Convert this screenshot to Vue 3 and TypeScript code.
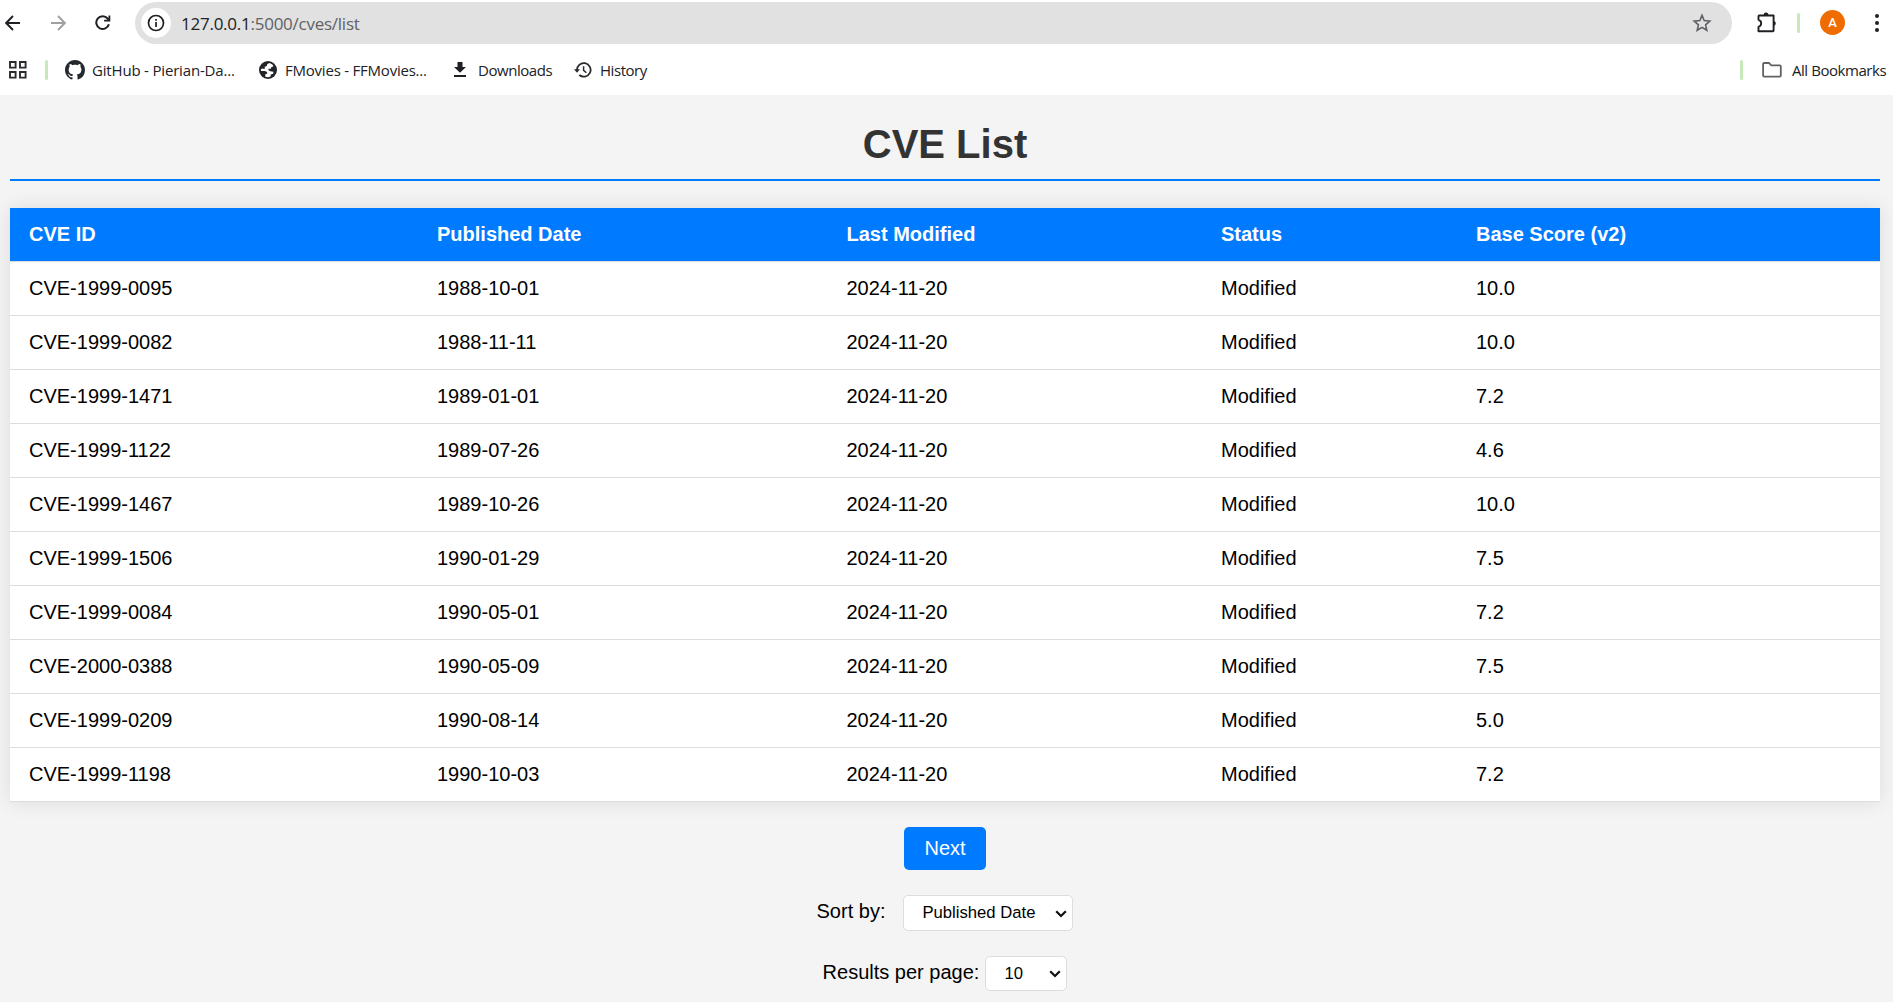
<script setup lang="ts">
import { ref } from 'vue'

interface Cve {
  id: string
  published: string
  modified: string
  status: string
  score: string
}

const headers: string[] = ['CVE ID', 'Published Date', 'Last Modified', 'Status', 'Base Score (v2)']

const make = (id: string, published: string, score: string): Cve => ({
  id,
  published,
  modified: '2024-11-20',
  status: 'Modified',
  score,
})

const rows = ref<Cve[]>([
  make('CVE-1999-0095', '1988-10-01', '10.0'),
  make('CVE-1999-0082', '1988-11-11', '10.0'),
  make('CVE-1999-1471', '1989-01-01', '7.2'),
  make('CVE-1999-1122', '1989-07-26', '4.6'),
  make('CVE-1999-1467', '1989-10-26', '10.0'),
  make('CVE-1999-1506', '1990-01-29', '7.5'),
  make('CVE-1999-0084', '1990-05-01', '7.2'),
  make('CVE-2000-0388', '1990-05-09', '7.5'),
  make('CVE-1999-0209', '1990-08-14', '5.0'),
  make('CVE-1999-1198', '1990-10-03', '7.2'),
])
</script>

<template>
  <div class="window">
    <header class="chrome">
      <div class="toolbar">
        <svg class="back" width="16" height="16" viewBox="0 0 16 16"><path d="M15 8H1.5M8 1 1.2 8 8 15" fill="none" stroke="#1f2023" stroke-width="1.9" /></svg>
        <svg class="forward" width="16" height="16" viewBox="0 0 16 16"><path d="M1 8h13.5M8 1l6.8 7L8 15" fill="none" stroke="#a0a0a2" stroke-width="1.9" /></svg>
        <svg class="reload" width="16" height="16" viewBox="0 0 16 16"><path d="M13.9 9.2A6.4 6.4 0 1 1 12.6 3.5L14.4 5.3" fill="none" stroke="#1f2023" stroke-width="2" /><path d="M15.3 .4v6.2H9.1V4.8h4.4V.4z" fill="#1f2023" /></svg>
        <div class="omnibox">
          <span class="site-info">
            <svg width="18" height="18" viewBox="0 0 18 18"><circle cx="9" cy="9" r="7.5" fill="none" stroke="#1f2023" stroke-width="1.7" /><path d="M8.2 8h1.7v5H8.2zM8.2 5h1.7v1.7H8.2z" fill="#1f2023" /></svg>
          </span>
          <span class="url"><b>127.0.0.1</b>:5000/cves/list</span>
          <svg class="star" width="20" height="20" viewBox="0 0 20 20"><path d="M10 2.4l2.2 5.2 5.6.5-4.2 3.7 1.2 5.5-4.8-2.9-4.8 2.9 1.2-5.5-4.2-3.7 5.6-.5z" fill="none" stroke="#5f6063" stroke-width="1.6" /></svg>
        </div>
        <svg class="ext" width="22" height="22" viewBox="0 0 22 22"><path d="M3.2 3.5H17.6V18.4Q17.6 19.2 16.8 19.2H2.5V14.9Q5.2 14 5.2 11.3T2.5 7.8V4.2Q2.5 3.5 3.2 3.5z" fill="none" stroke="#1f2023" stroke-width="1.9" stroke-linejoin="round" /><path d="M7.6 3.4a2.4 2.8 0 0 1 4.8 0zM17.8 8.9a2.5 2.5 0 0 1 0 4.9z" fill="#1f2023" /></svg>
        <i class="bar bar-top"></i>
        <span class="avatar">A</span>
        <svg class="menu" width="6" height="20" viewBox="0 0 6 20"><circle cx="3" cy="3" r="2" fill="#1f2023" /><circle cx="3" cy="10" r="2" fill="#1f2023" /><circle cx="3" cy="17" r="2" fill="#1f2023" /></svg>
      </div>
      <nav class="bookmarks">
        <svg class="apps" width="20" height="20" viewBox="0 0 20 20"><path d="M2 2h5.6v5.6H2zM12 2h5.6v5.6H12zM2 12h5.6v5.6H2zM12 12h5.6v5.6H12z" fill="none" stroke="#2a2b2e" stroke-width="1.9" /></svg>
        <i class="bar bar-left"></i>
        <svg class="github" width="20" height="20" viewBox="0 0 16 16"><path fill="#24292e" d="M8 0C3.58 0 0 3.58 0 8c0 3.54 2.29 6.53 5.47 7.59.4.07.55-.17.55-.38 0-.19-.01-.82-.01-1.49-2.01.37-2.53-.49-2.69-.94-.09-.23-.48-.94-.82-1.13-.28-.15-.68-.52-.01-.53.63-.01 1.08.58 1.23.82.72 1.21 1.87.87 2.33.66.07-.52.28-.87.51-1.07-1.78-.2-3.64-.89-3.64-3.95 0-.87.31-1.59.82-2.15-.08-.2-.36-1.02.08-2.12 0 0 .67-.21 2.2.82.64-.18 1.32-.27 2-.27s1.36.09 2 .27c1.53-1.04 2.2-.82 2.2-.82.44 1.1.16 1.92.08 2.12.51.56.82 1.27.82 2.15 0 3.07-1.87 3.75-3.65 3.95.29.25.54.73.54 1.48 0 1.07-.01 1.93-.01 2.2 0 .21.15.46.55.38A8.01 8.01 0 0 0 16 8c0-4.42-3.58-8-8-8z" /></svg>
        <span class="bm bm-github">GitHub - Pierian-Da...</span>
        <svg class="globe" width="18" height="18" viewBox="0 0 18 18"><circle cx="9" cy="9" r="9" fill="#232427" /><path d="M10.8 1.9 8.2 3.1 7.9 5 5.8 5.8 5.7 8 3.2 7.6 1.8 8.6 2 10 5.6 10.1Q8.4 10.4 8.5 12.2L6.3 13.4 6.2 15.6Q8.7 16.7 11.5 15.6L11.8 13.5 14.2 12.8 14.4 10.8 11.3 10.3 9.3 9 9.5 7.8 12 7.7 12.3 5.9 14.4 5.4 13.7 3.7z" fill="#fff" /></svg>
        <span class="bm bm-movies">FMovies - FFMovies...</span>
        <svg class="download" width="12" height="15" viewBox="0 0 12 15"><path d="M3.5 0h5v5H12L6 10.8 0 5h3.5zM0 12.9h12v2H0z" fill="#1f2023" /></svg>
        <span class="bm bm-downloads">Downloads</span>
        <svg class="clock" width="18" height="16" viewBox="0 0 18 16"><path d="M3 8.4A6.8 6.8 0 1 1 5.3 13" fill="none" stroke="#2a2b2e" stroke-width="1.8" /><path d="M0 7.3h6L3 10.8z" fill="#2a2b2e" /><path d="M9.6 4.2v4.2l2.8 2.4" fill="none" stroke="#2a2b2e" stroke-width="1.5" /></svg>
        <span class="bm bm-history">History</span>
        <span class="spacer"></span>
        <i class="bar bar-right"></i>
        <svg class="folder" width="20" height="16" viewBox="0 0 20 16"><path d="M1.1 13.6V2Q1.1 1 2.1 1H7l2.2 2.3h8.6q1 0 1 1v9.3q0 1-1 1H2.1q-1 0-1-1z" fill="none" stroke="#616265" stroke-width="1.8" /></svg>
        <span class="bm bm-all">All Bookmarks</span>
      </nav>
    </header>

    <main class="page">
      <h1>CVE List</h1>
      <table>
        <colgroup>
          <col class="c1" /><col class="c2" /><col class="c3" /><col class="c4" /><col />
        </colgroup>
        <thead>
          <tr><th v-for="h in headers" :key="h">{{ h }}</th></tr>
        </thead>
        <tbody>
          <tr v-for="r in rows" :key="r.id">
            <td>{{ r.id }}</td>
            <td>{{ r.published }}</td>
            <td>{{ r.modified }}</td>
            <td>{{ r.status }}</td>
            <td>{{ r.score }}</td>
          </tr>
        </tbody>
      </table>
      <button class="next" type="button">Next</button>
      <div class="field sort">
        <label>Sort by:</label>
        <div class="select">
          <span>Published Date</span>
          <svg width="12" height="8" viewBox="0 0 12 8"><path d="M1.2 1.2 6 6l4.8-4.8" fill="none" stroke="#111" stroke-width="2.2" /></svg>
        </div>
      </div>
      <div class="field per-page">
        <label>Results per page:</label>
        <div class="select">
          <span>10</span>
          <svg width="12" height="8" viewBox="0 0 12 8"><path d="M1.2 1.2 6 6l4.8-4.8" fill="none" stroke="#111" stroke-width="2.2" /></svg>
        </div>
      </div>
    </main>
  </div>
</template>

<style>
body {
  margin: 0;
  background: #f4f4f4;
  overflow: hidden;
}
</style>

<style scoped>
.window {
  height: 1002px;
  overflow: hidden;
  background: #f4f4f4;
  font-family: 'Liberation Sans', Arial, sans-serif;
}
svg { flex: none; display: block; }
.chrome {
  height: 95px;
  background: #fff;
  font-family: 'Open Sans', 'Noto Sans', sans-serif;
  color: #202124;
}
.toolbar {
  display: flex;
  align-items: center;
  height: 45px;
  padding-left: 5px;
}
.forward { margin-left: 29px; }
.reload { margin-left: 29px; }
.omnibox {
  display: flex;
  align-items: center;
  box-sizing: border-box;
  width: 1597px;
  height: 42px;
  margin: 1px 0 0 24px;
  padding: 0 20px 0 6px;
  border-radius: 21px;
  background: #e1e1e1;
}
.site-info {
  display: flex;
  align-items: center;
  justify-content: center;
  width: 30px;
  height: 30px;
  border-radius: 50%;
  background: #fff;
}
.url {
  margin-left: 10px;
  font-size: 17px;
  letter-spacing: -0.25px;
  color: #606164;
  white-space: nowrap;
}
.url b { font-weight: 400; color: #202124; }
.star { margin-left: auto; }
.ext { margin-left: 24px; }
.bar {
  display: block;
  flex: none;
  width: 3px;
  height: 20px;
  border-radius: 2px;
  background: #c7e9b9;
}
.bar-top { margin-left: 19px; }
.avatar {
  display: flex;
  align-items: center;
  justify-content: center;
  width: 25px;
  height: 25px;
  margin-left: 20px;
  border-radius: 50%;
  background: #ef6c00;
  color: #fff;
  font: 500 13px Roboto, sans-serif;
}
.menu { margin-left: 29px; }
.bookmarks {
  display: flex;
  align-items: center;
  height: 49px;
  padding: 0 6px 0 8px;
  font-size: 15px;
}
.bar-left { margin-left: 17px; }
.github { margin-left: 17px; }
.bm { flex: none; white-space: nowrap; line-height: 20px; letter-spacing: -0.45px; }
.bm-github { width: 141px; margin-left: 7px; letter-spacing: -0.18px; }
.globe { margin-left: 26px; }
.bm-movies { width: 142px; margin-left: 8px; letter-spacing: -0.22px; }
.download { margin-left: 27px; }
.bm-downloads { width: 74px; margin-left: 12px; }
.clock { margin-left: 22px; }
.bm-history { margin-left: 8px; }
.spacer { flex: 1; }
.folder { margin-left: 19px; }
.bm-all { width: 95px; margin-left: 10px; }

.page {
  display: flex;
  flex-direction: column;
  align-items: center;
  width: 1870px;
  margin-left: 10px;
  font-size: 20px;
  color: #000;
}
h1 {
  box-sizing: border-box;
  width: 100%;
  height: 86px;
  margin: 0 0 27px;
  padding-top: 26px;
  border-bottom: 2px solid #007bff;
  font-size: 40px;
  line-height: 46px;
  text-align: center;
  color: #333;
}
table {
  width: 100%;
  table-layout: fixed;
  border-collapse: separate;
  border-spacing: 0;
  background: #fff;
  box-shadow: 0 0 19px rgba(0, 0, 0, 0.1);
}
.c1 { width: 408px; }
.c2 { width: 409.5px; }
.c3 { width: 374.5px; }
.c4 { width: 255px; }
th, td {
  box-sizing: border-box;
  height: 54px;
  padding: 0 0 0 19px;
  border-bottom: 1px solid #ddd;
  text-align: left;
  line-height: 23px;
}
th { background: #007bff; color: #fff; }
.next {
  width: 82px;
  height: 43px;
  margin-top: 25px;
  padding: 0;
  border: 0;
  border-radius: 5px;
  background: #007bff;
  color: #fff;
  font: 20px 'Liberation Sans', Arial, sans-serif;
}
.field { display: flex; align-items: center; }
.field label { white-space: nowrap; padding-bottom: 3px; }
.sort { height: 36px; margin-top: 25px; }
.sort label { margin-right: 18px; }
.sort .select { width: 170px; }
.per-page { height: 35px; margin-top: 25px; }
.per-page label { margin-right: 6px; padding-bottom: 2px; }
.per-page .select { width: 82px; }
.select {
  display: flex;
  align-items: center;
  justify-content: space-between;
  box-sizing: border-box;
  height: 100%;
  padding: 0 5px 0 18px;
  border: 1px solid #ddd;
  border-radius: 5px;
  background: #fff;
  font-size: 16.67px;
  white-space: nowrap;
}
.select svg { margin-top: 1px; }
</style>
